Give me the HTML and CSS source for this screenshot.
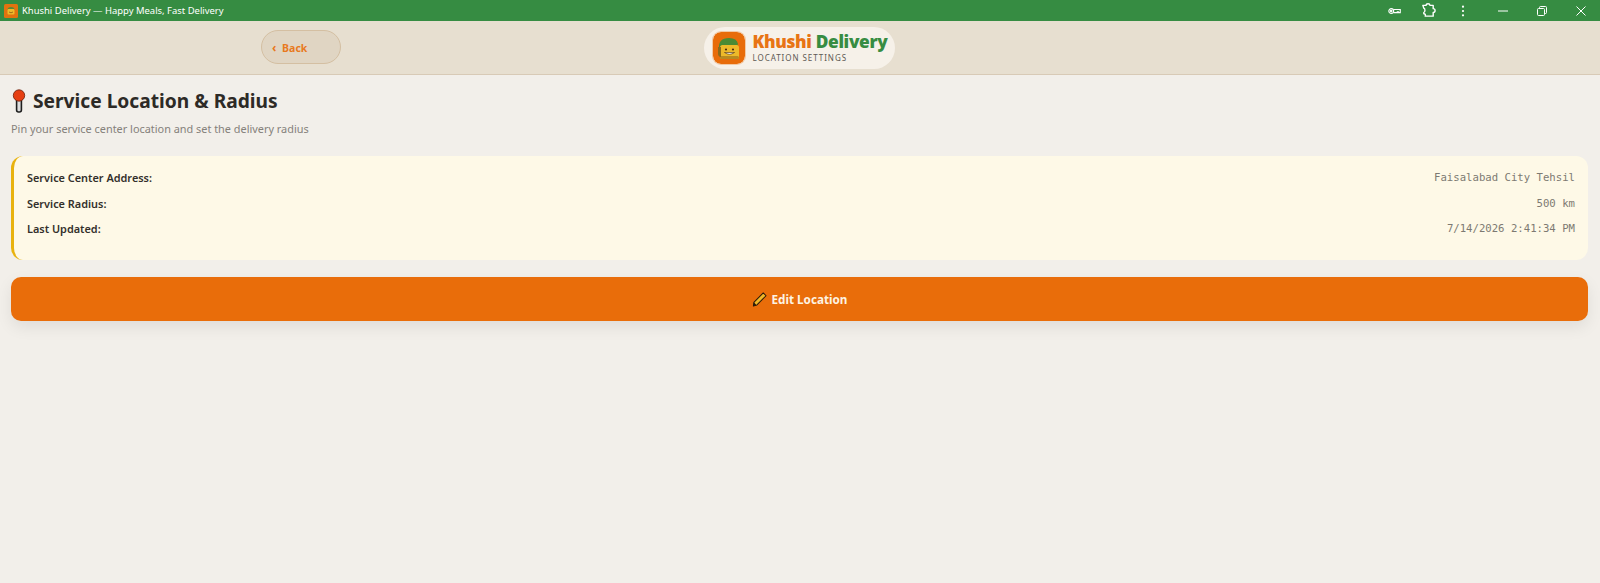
FILE: index.html
```html
<!DOCTYPE html>
<html lang="en">
<head>
    <meta charset="UTF-8">
    <title>Khushi Delivery — Happy Meals, Fast Delivery</title>
    <link rel="stylesheet" href="styles.css">
</head>
<body>
    <!-- window title bar -->
    <div class="titlebar">
        <svg class="app-icon" viewBox="0 0 14 14">
            <rect width="14" height="14" rx="1.5" fill="#e2730f"/>
            <path d="M3.5 6q0-3 3.5-3t3.5 3z" fill="#5a8a35"/>
            <rect x="3.5" y="5" width="7" height="5.5" rx="1" fill="#eeba2a"/>
            <path d="M5 8q2 1.6 4 0" stroke="#7a4a10" stroke-width=".7" fill="none"/>
        </svg>
        <span class="app-title">Khushi Delivery — Happy Meals, Fast Delivery</span>
        <div class="win-tools">
            <svg class="tool-key" viewBox="0 0 14 8" fill="none" stroke="#fff" stroke-width="1.2">
                <circle cx="3.5" cy="4" r="2.6"/>
                <circle cx="3.5" cy="4" r=".8" fill="#fff"/>
                <path d="M6.2 2.4h7v3.4h-2v-1h-1.2v1h-3.8"/>
            </svg>
            <svg class="tool-ext" viewBox="0 0 16 16" fill="none" stroke="#fff" stroke-width="1.5" stroke-linejoin="round">
                <path d="M2 2.5h3.5q0-1.7 2-1.7t2 1.7h3.5v3.5q2 0 2 2t-2 2v4h-8.5q.8-2.5-1.5-2.5v-1.5q1.2 0 1.2-2.2t-1.2-2.2z"/>
            </svg>
            <svg class="tool-dots" viewBox="0 0 4 14" fill="#fff">
                <circle cx="2" cy="2" r="1.3"/>
                <circle cx="2" cy="7" r="1.3"/>
                <circle cx="2" cy="12" r="1.3"/>
            </svg>
        </div>
        <div class="win-buttons">
            <svg class="win-btn" viewBox="0 0 10 10" stroke="#fff" fill="none"><path d="M0 5h10"/></svg>
            <svg class="win-btn" viewBox="0 0 10 10" stroke="#fff" fill="none"><rect x=".5" y="2.5" width="7" height="7" rx="1"/><path d="M2.5 2.5v-1q0-1 1-1h5q1 0 1 1v5q0 1-1 1h-1"/></svg>
            <svg class="win-btn" viewBox="0 0 10 10" stroke="#fff" fill="none"><path d="M.5 .5l9 9M9.5 .5l-9 9"/></svg>
        </div>
    </div>

    <header class="topbar">
        <div class="topbar-left">
            <button class="back-button"><span class="back-arrow">‹</span> Back</button>
        </div>
        <div class="brand">
            <svg class="brand-logo" viewBox="0 0 32 32">
                <rect width="32" height="32" rx="8" fill="#e86c0a"/>
                <path d="M6 17q-1-11 10-11 8 0 9 6l-2 4z" fill="#4a8a34"/>
                <rect x="7" y="13" width="19" height="14" rx="2.5" fill="#edb92a"/>
                <rect x="7" y="24" width="19" height="3" rx="1.5" fill="#b98a20"/>
                <path d="M5 15h3v10h-1q-2-1-2-3z" fill="#8a6a1c"/>
                <circle cx="13" cy="17.5" r="1.1" fill="#4a2c0c"/>
                <circle cx="20" cy="17.5" r="1.1" fill="#4a2c0c"/>
                <path d="M11.5 20.5q5 3.5 10 0z" fill="#fff" stroke="#4a2c0c" stroke-width=".6"/>
            </svg>
            <div class="brand-text">
                <div class="brand-name"><span class="brand-orange">Khushi</span> <span class="brand-green">Delivery</span></div>
                <div class="brand-sub">LOCATION SETTINGS</div>
            </div>
        </div>
        <div></div>
    </header>

    <main class="content">
        <h1 class="page-title">
            <svg class="pin-icon" viewBox="0 0 14 24">
                <rect x="4.6" y="10" width="4.8" height="13" rx="2" fill="#ddd" stroke="#1e1e1e" stroke-width="1.6"/>
                <circle cx="7" cy="6.5" r="5.7" fill="#e63f12" stroke="#6a1e0a" stroke-width=".8"/>
            </svg>
            Service Location &amp; Radius
        </h1>
        <p class="page-sub">Pin your service center location and set the delivery radius</p>

        <section class="info-card">
            <div class="info-row"><span class="info-label">Service Center Address:</span><span class="info-value">Faisalabad City Tehsil</span></div>
            <div class="info-row"><span class="info-label">Service Radius:</span><span class="info-value">500 km</span></div>
            <div class="info-row"><span class="info-label">Last Updated:</span><span class="info-value">7/14/2026 2:41:34 PM</span></div>
        </section>

        <button class="edit-button">
            <svg class="pencil-icon" viewBox="0 0 16 16">
                <path d="M12 1l3 3L5 14l-3.5 1L2 11z" fill="#f0b828" stroke="#2a1a0a" stroke-width="1.1" stroke-linejoin="round"/>
                <path d="M2 11l3 3-3.5 1z" fill="#2a1a0a"/>
            </svg>
            Edit Location
        </button>
    </main>
</body>
</html>
```

FILE: styles.css
```css
* {
    margin: 0;
    padding: 0;
    box-sizing: border-box;
}

body {
    min-height: 583px;
    background: #f2efea;
    font-family: 'Noto Sans', 'Open Sans', sans-serif;
    color: #2d2a26;
    overflow: hidden;
}

/* title bar */
.titlebar {
    height: 21px;
    display: flex;
    align-items: center;
    background: #368c42;
    color: #fff;
    padding-left: 4px;
}

.app-icon {
    width: 14px;
    height: 14px;
}

.app-title {
    margin-left: 4px;
    font-size: 9.45px;
}

.win-tools {
    margin-left: auto;
    display: flex;
    align-items: center;
}

.tool-key {
    width: 13px;
    height: 8px;
}

.tool-ext {
    width: 15px;
    height: 15px;
    margin-left: 20px;
}

.tool-dots {
    width: 4px;
    height: 12px;
    margin-left: 25px;
}

.win-buttons {
    display: flex;
    align-items: center;
    gap: 29px;
    margin-left: 33px;
    margin-right: 14px;
}

.win-btn {
    width: 10px;
    height: 10px;
}

/* header */
.topbar {
    height: 54px;
    display: grid;
    grid-template-columns: 1fr auto 1fr;
    align-items: center;
    background: #e7dfd0;
    border-bottom: 1px solid #d8cab6;
}

.topbar-left {
    padding-left: 261px;
    padding-bottom: 1px;
}

.back-button {
    width: 80px;
    height: 34px;
    padding-left: 10px;
    text-align: left;
    background: #e0d5c3;
    border: 1px solid #d4bfa2;
    border-radius: 17px;
    color: #e87a1e;
    font-family: inherit;
    font-size: 10.5px;
    font-weight: 700;
}

.back-arrow {
    font-size: 12px;
    margin-right: 3px;
}

.brand {
    width: 191px;
    height: 42px;
    margin-right: 2px;
    display: flex;
    align-items: center;
    padding-left: 9px;
    background: #f6f1e9;
    border-radius: 21px;
}

.brand-logo {
    width: 32px;
    height: 32px;
    box-shadow: 0 0 0 1px #f2c9a5;
    border-radius: 8px;
}

.brand-text {
    margin-left: 8px;
}

.brand-name {
    font-size: 17.3px;
    font-weight: 900;
    line-height: 20px;
    white-space: nowrap;
    letter-spacing: -0.35px;
}

.brand-orange {
    color: #e87414;
}

.brand-green {
    color: #378c42;
}

.brand-sub {
    margin-top: 1px;
    font-size: 8px;
    line-height: 10px;
    letter-spacing: 0.95px;
    color: #5e5a54;
}

/* page */
.content {
    padding: 12px 12px 0 11px;
}

.page-title {
    display: flex;
    align-items: center;
    gap: 7px;
    font-size: 19.2px;
    line-height: 27px;
    font-weight: 700;
}

.pin-icon {
    width: 14px;
    height: 24px;
    margin-left: 1px;
}

.page-sub {
    margin-top: 7px;
    font-size: 10.9px;
    line-height: 16px;
    color: #85817b;
}

.info-card {
    height: 104px;
    margin-top: 19px;
    padding: 9px 13px 0 13px;
    background: #fef9e7;
    border-left: 3px solid #e8b20e;
    border-radius: 12px;
}

.info-row {
    display: flex;
    justify-content: space-between;
    align-items: center;
    height: 25.5px;
}

.info-label {
    font-size: 10.9px;
    font-weight: 600;
    color: #33302b;
}

.info-value {
    font-family: 'DejaVu Sans Mono', 'Liberation Mono', monospace;
    font-size: 10.65px;
    color: #7d7972;
}

.edit-button {
    width: 100%;
    height: 44px;
    margin-top: 17px;
    display: flex;
    align-items: center;
    justify-content: center;
    gap: 5px;
    background: #e96d0a;
    border: none;
    border-radius: 10px;
    box-shadow: 0 6px 16px rgba(0, 0, 0, 0.08);
    color: #fdf3e3;
    font-family: inherit;
    font-size: 11.7px;
    font-weight: 700;
}

.pencil-icon {
    width: 15px;
    height: 15px;
}
```
